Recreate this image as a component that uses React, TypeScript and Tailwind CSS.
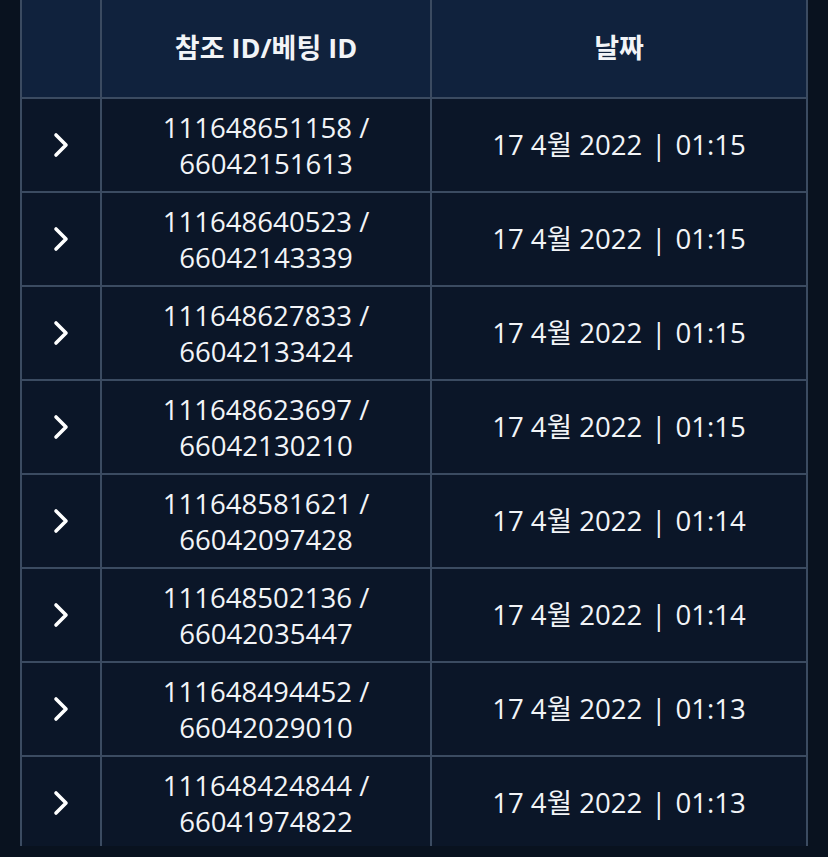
import React from 'react';

const rows = [
  { ref: '111648651158', bet: '66042151613', date: '17 4월 2022', time: '01:15' },
  { ref: '111648640523', bet: '66042143339', date: '17 4월 2022', time: '01:15' },
  { ref: '111648627833', bet: '66042133424', date: '17 4월 2022', time: '01:15' },
  { ref: '111648623697', bet: '66042130210', date: '17 4월 2022', time: '01:15' },
  { ref: '111648581621', bet: '66042097428', date: '17 4월 2022', time: '01:14' },
  { ref: '111648502136', bet: '66042035447', date: '17 4월 2022', time: '01:14' },
  { ref: '111648494452', bet: '66042029010', date: '17 4월 2022', time: '01:13' },
  { ref: '111648424844', bet: '66041974822', date: '17 4월 2022', time: '01:13' },
];

const Chevron = () => (
  <svg width="16" height="26" viewBox="0 0 16 26" fill="none">
    <polyline points="3,3 13,13 3,23" stroke="#ffffff" strokeWidth="3.6" strokeLinecap="round" strokeLinejoin="round" />
  </svg>
);

const App: React.FC = () => {
  return (
    <div
      className="w-[828px] h-[857px] bg-[#09121f] px-[20px] text-[#f2f4f7]"
      style={{ fontFamily: '"Open Sans", "Noto Sans CJK KR", sans-serif' }}
    >
      <div className="h-[846px] overflow-hidden">
        <div className="grid grid-cols-[80px_330px_378px]">
          <div className="h-[97px] bg-[#10223d] border-l-2 border-[#3b4b61]" />
          <div className="h-[97px] bg-[#10223d] border-l-2 border-[#3b4b61] flex items-center justify-center text-[27px] font-bold">
            참조 ID/베팅 ID
          </div>
          <div className="h-[97px] bg-[#10223d] border-x-2 border-[#3b4b61] flex items-center justify-center text-[27px] font-bold">
            날짜
          </div>
          {rows.map((r) => (
            <React.Fragment key={r.ref}>
              <div className="h-[94px] bg-[#0b1628] border-l-2 border-t-2 border-[#3b4b61] flex items-center justify-center">
                <Chevron />
              </div>
              <div className="h-[94px] bg-[#0b1628] border-l-2 border-t-2 border-[#3b4b61] flex flex-col items-center justify-center text-[27.6px] leading-[36px]">
                <span>{r.ref} /</span>
                <span>{r.bet}</span>
              </div>
              <div className="h-[94px] bg-[#0b1628] border-x-2 border-t-2 border-[#3b4b61] flex items-center justify-center text-[27.6px]">
                <span>{r.date}</span>
                <span className="mx-[9px]">|</span>
                <span>{r.time}</span>
              </div>
            </React.Fragment>
          ))}
        </div>
      </div>
    </div>
  );
};

export default App;
